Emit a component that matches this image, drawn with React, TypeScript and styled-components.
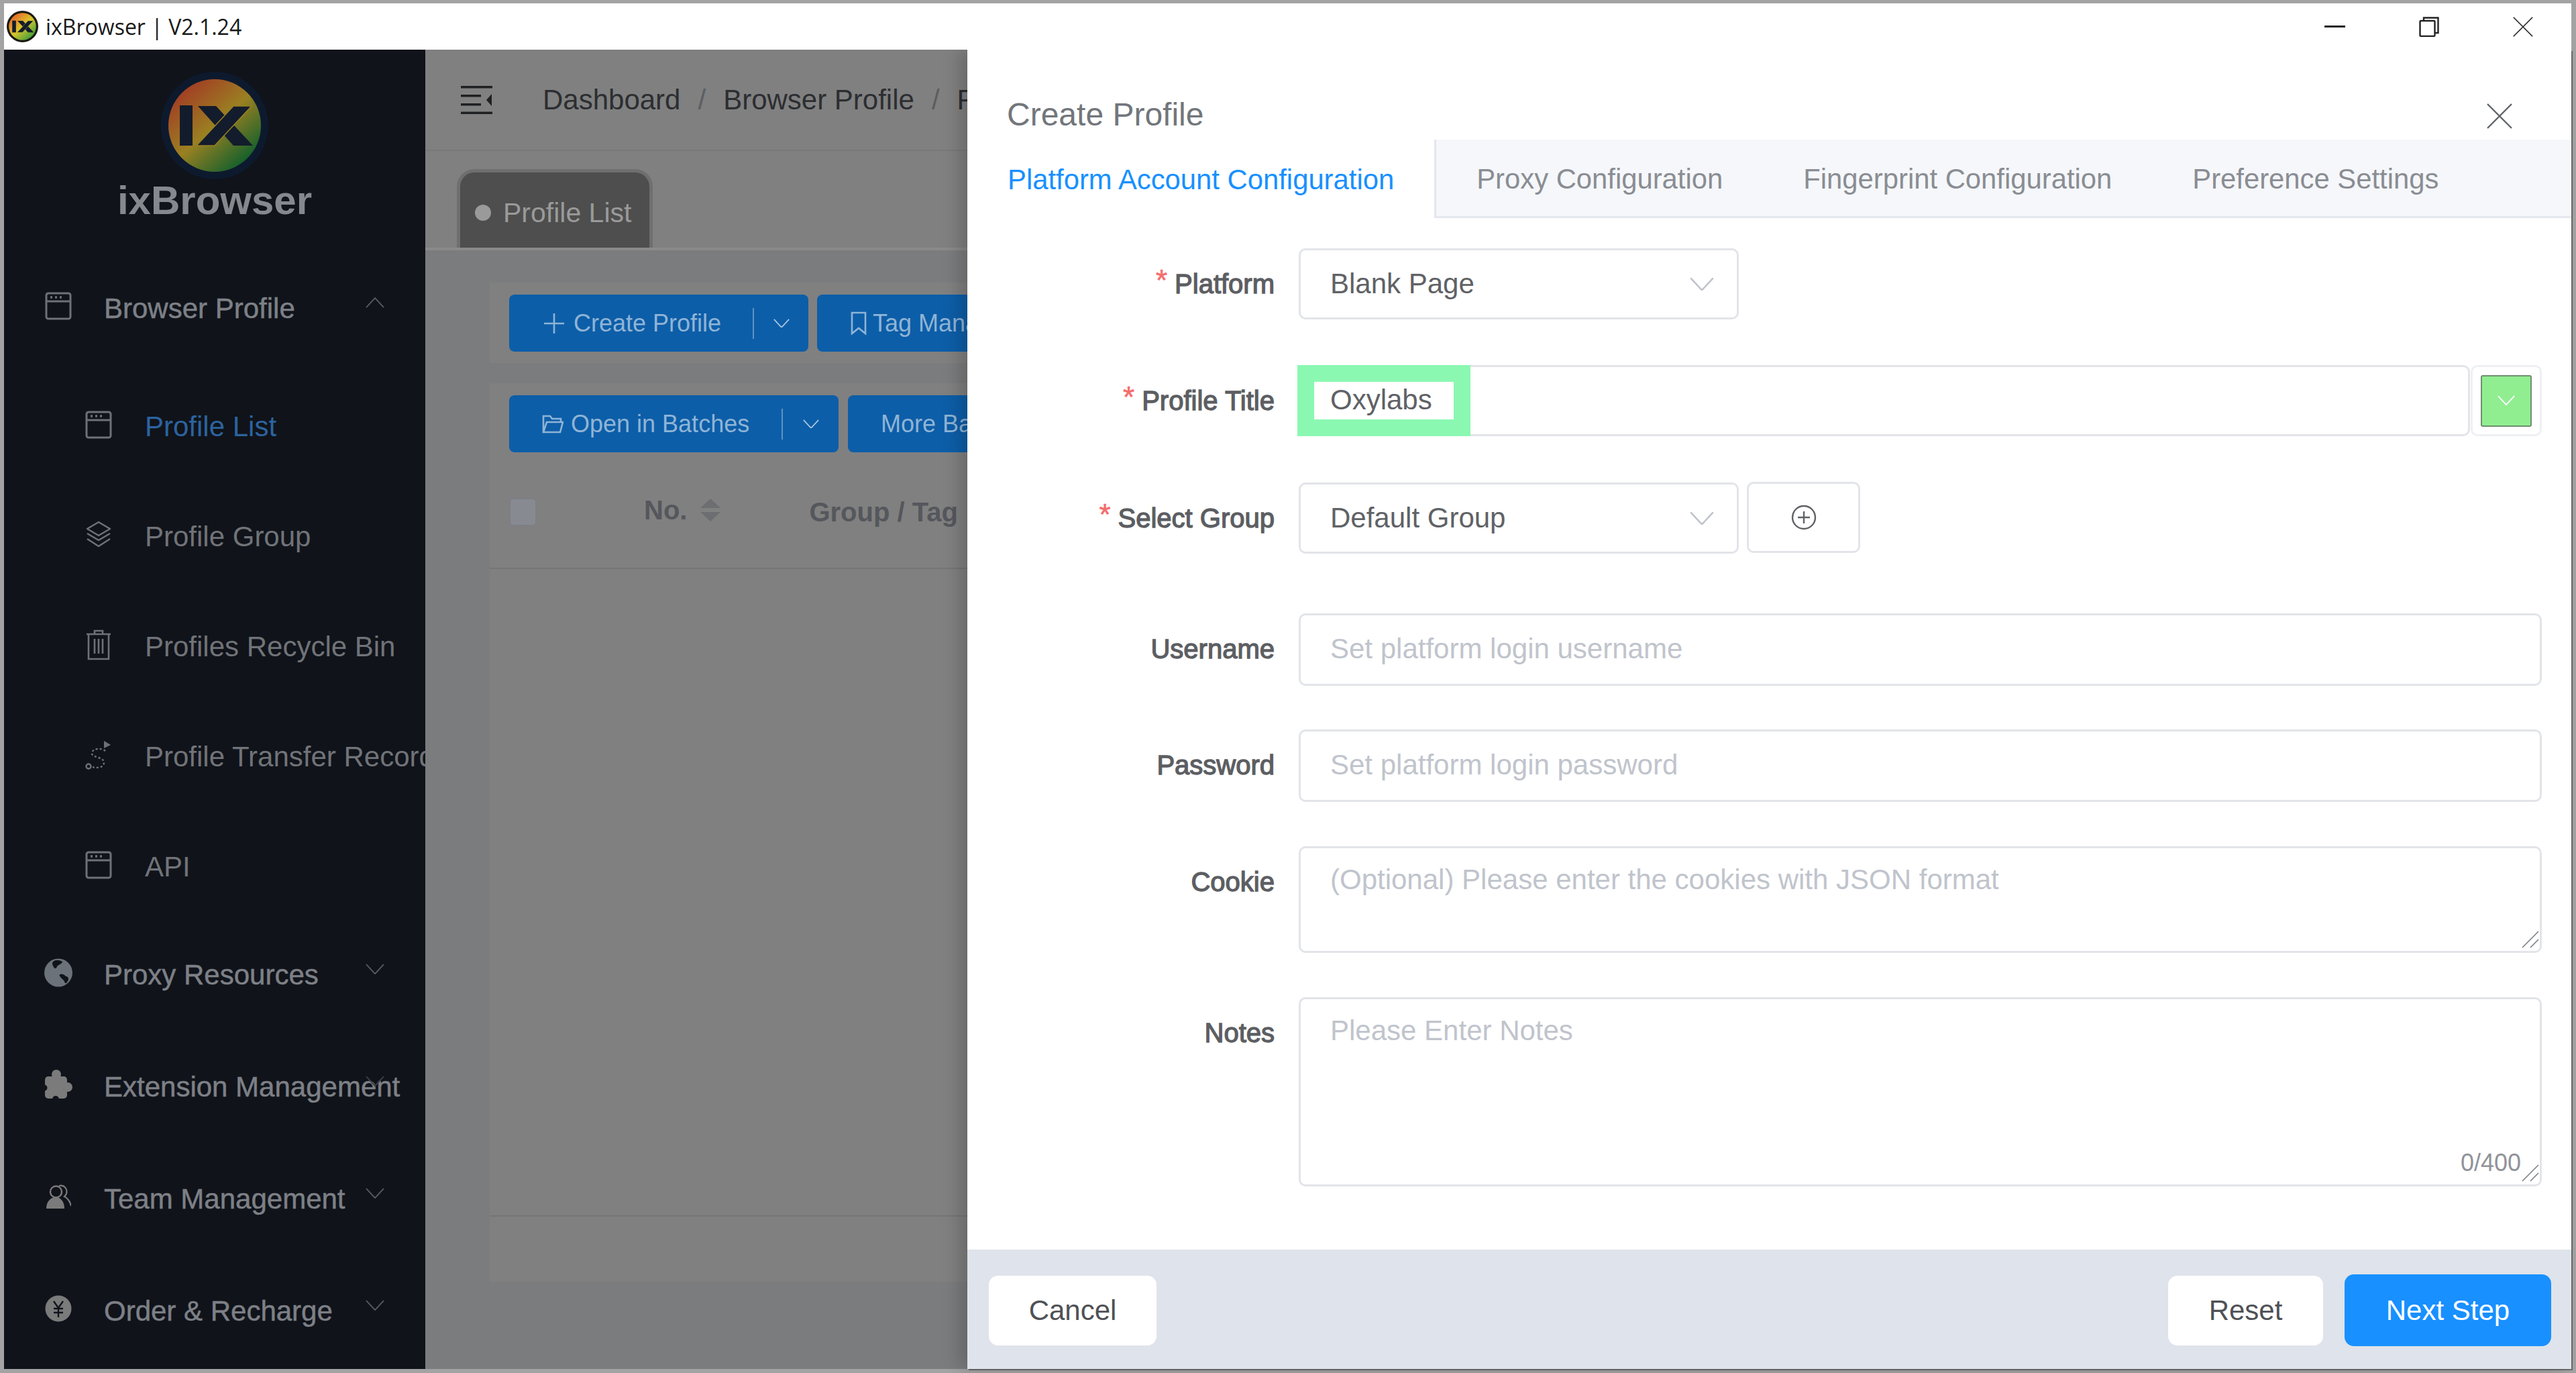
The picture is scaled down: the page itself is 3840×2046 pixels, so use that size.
import React from "react";
import styled, { createGlobalStyle } from "styled-components";

const GlobalStyle = createGlobalStyle`
  html, body {
    margin: 0;
    padding: 0;
    background: #a3a3a3;
    font-family: "Liberation Sans", Arial, sans-serif;
  }
  * {
    box-sizing: border-box;
  }
`;

const Frame = styled.div`
  position: relative;
  width: 3840px;
  height: 2046px;
  padding: 5px 7px 6px 6px;
  background: #a3a3a3;
  display: flex;
  flex-direction: column;
  overflow: hidden;
`;

const TitleBar = styled.header`
  position: relative;
  z-index: 2;
  height: 69px;
  flex: none;
  background: #fff;
  display: flex;
  align-items: center;
  padding-left: 4px;
`;

const AppName = styled.span`
  margin-left: 11px;
  font-family: "Open Sans", "Noto Sans", sans-serif;
  font-size: 32px;
  color: #1a1a1a;
  white-space: nowrap;
`;

const WindowButtons = styled.div`
  margin-left: auto;
  display: flex;
  align-items: center;
  gap: 110px;
  padding-right: 57px;
  color: #222;
`;

const Body = styled.div`
  position: relative;
  flex: 1;
  display: flex;
  min-height: 0;
`;

const Sidebar = styled.aside`
  width: 628px;
  flex: none;
  background: #10131a;
  display: flex;
  flex-direction: column;
  overflow: hidden;
`;

const Brand = styled.div`
  height: 307px;
  flex: none;
  display: flex;
  flex-direction: column;
  align-items: center;
  padding-top: 33px;
`;

const BrandName = styled.div`
  margin-top: -3px;
  font-size: 60px;
  line-height: 70px;
  font-weight: 700;
  color: #85888d;
`;

const TopRow = styled.div<{ $gap?: number }>`
  position: relative;
  height: 156px;
  flex: none;
  display: flex;
  align-items: center;
  padding-left: 60px;
  margin-top: ${(p) => p.$gap ?? 0}px;
  color: #6e7177;
`;

const RowIcon = styled.span`
  width: 42px;
  height: 46px;
  flex: none;
  display: flex;
  align-items: center;
  justify-content: center;
  margin-top: -6px;
`;

const TopLabel = styled.span`
  margin-left: 47px;
  padding-top: 2px;
  font-size: 42px;
  color: #7d8086;
  white-space: nowrap;
  -webkit-text-stroke: 0.5px #7d8086;
`;

const RowChevron = styled.span`
  position: absolute;
  left: 539px;
  top: 62px;
  line-height: 0;
`;

const SubList = styled.div`
  margin-top: 17px;
  display: flex;
  flex-direction: column;
`;

const SubRow = styled.div`
  height: 164px;
  flex: none;
  display: flex;
  align-items: center;
  padding-left: 120px;
  color: #6e7177;
`;

const SubLabel = styled.span<{ $active?: boolean }>`
  margin-left: 48px;
  font-size: 42px;
  color: ${(p) => (p.$active ? "#2c639f" : "#707378")};
  white-space: nowrap;
`;

const Main = styled.main`
  flex: 1;
  min-width: 0;
  background: #7b7c7d;
  display: flex;
  flex-direction: column;
  overflow: hidden;
`;

const NavBar = styled.div`
  height: 151px;
  flex: none;
  background: #808080;
  display: flex;
  align-items: center;
  padding-left: 53px;
  border-bottom: 2px solid #787878;
  white-space: nowrap;
`;

const Crumbs = styled.div`
  margin-left: 75px;
  display: flex;
  gap: 26px;
  font-size: 42px;
  color: #2c2e31;
`;

const CrumbSep = styled.span`
  color: #5c5e61;
`;

const TabStrip = styled.div`
  height: 148px;
  flex: none;
  background: #808080;
  padding: 27px 0 0 47px;
  border-bottom: 4px solid #8a8a8a;
`;

const ViewTab = styled.div`
  width: 292px;
  height: 117px;
  background: #4e4e4e;
  border: 5px solid #6f6f6f;
  border-bottom: none;
  border-radius: 26px 26px 0 0;
  display: flex;
  align-items: center;
  padding: 8px 0 0 22px;
  gap: 18px;
  font-size: 41px;
  color: #9a9a9a;
  white-space: nowrap;
`;

const Dot = styled.span`
  width: 24px;
  height: 24px;
  border-radius: 50%;
  background: #9a9a9a;
`;

const Content = styled.div`
  flex: 1;
  padding: 48px 0 0 96px;
  display: flex;
  flex-direction: column;
`;

const ToolbarCard = styled.div`
  height: 120px;
  flex: none;
  background: #808080;
  padding: 18px 0 0 29px;
  display: flex;
  gap: 13px;
  white-space: nowrap;
`;

const TableCard = styled.div`
  margin-top: 30px;
  height: 1339px;
  flex: none;
  background: #808080;
  padding-top: 18px;
  display: flex;
  flex-direction: column;
  white-space: nowrap;
`;

const TableActions = styled.div`
  display: flex;
  gap: 14px;
  padding-left: 29px;
`;

const BlueButton = styled.div`
  height: 85px;
  flex: none;
  background: #0d5ea8;
  border-radius: 8px;
  display: flex;
  align-items: center;
  color: #8fb4d6;
  font-size: 36px;
`;

const ButtonMain = styled.span<{ $width: number }>`
  width: ${(p) => p.$width}px;
  display: flex;
  align-items: center;
  gap: 11px;
  padding-left: 49px;
`;

const ButtonCaret = styled.span<{ $width: number }>`
  width: ${(p) => p.$width}px;
  height: 46px;
  display: flex;
  align-items: center;
  justify-content: center;
  border-left: 2px solid #5f93c3;
`;

const PlainButton = styled(BlueButton)`
  padding-left: 49px;
  gap: 8px;
  width: 500px;
`;

const HeadRow = styled.div`
  height: 174px;
  flex: none;
  display: flex;
  align-items: center;
  padding: 6px 0 0 29px;
  border-bottom: 2px solid #757575;
  color: #55575c;
  font-size: 40px;
  font-weight: 700;
`;

const CheckBox = styled.span`
  width: 41px;
  height: 42px;
  background: #888a92;
  border: 2px solid #7d7f86;
  border-radius: 6px;
  margin-right: 160px;
`;

const NoLabel = styled.span`
  margin-top: -5px;
`;

const SortGroup = styled.span`
  display: flex;
  flex-direction: column;
  gap: 6px;
  margin: -6px 132px 0 20px;
`;

const Spacer = styled.div`
  flex: 1;
  border-bottom: 2px solid #757575;
`;

const TableFooter = styled.div`
  height: 97px;
  flex: none;
`;

const Drawer = styled.section`
  position: absolute;
  top: 0;
  right: 0;
  bottom: 0;
  width: 2391px;
  background: #fff;
  box-shadow: -12px 0 24px rgba(0, 0, 0, 0.18), 2px 2px 0 #6a6a6a;
  display: flex;
  flex-direction: column;
`;

const DrawerHead = styled.div`
  height: 134px;
  flex: none;
  display: flex;
  justify-content: space-between;
  align-items: flex-start;
  padding: 71px 88px 0 59px;
`;

const DrawerTitle = styled.h2`
  margin: 0;
  font-size: 48px;
  line-height: 52px;
  font-weight: 400;
  color: #72767b;
`;

const CloseButton = styled.span`
  margin-top: 9px;
  line-height: 0;
  color: #5f6368;
`;

const Tabs = styled.nav`
  height: 117px;
  flex: none;
  background: #f5f7fa;
  display: flex;
  border-bottom: 3px solid #e4e7ed;
`;

const Tab = styled.div<{ $active?: boolean }>`
  padding: 3px 60px 0;
  height: ${(p) => (p.$active ? "117px" : "114px")};
  display: flex;
  align-items: center;
  font-size: 41.8px;
  white-space: nowrap;
  color: ${(p) => (p.$active ? "#1890ff" : "#8a8d93")};
  background: ${(p) => (p.$active ? "#fff" : "transparent")};
  border-right: ${(p) => (p.$active ? "3px solid #e4e7ed" : "none")};
`;

const Form = styled.form`
  flex: 1;
  min-height: 0;
  padding: 45px 44px 0 0;
  display: flex;
  flex-direction: column;
`;

const Row = styled.div<{ $gap?: number }>`
  display: flex;
  align-items: flex-start;
  margin-bottom: ${(p) => p.$gap ?? 66}px;
`;

const Label = styled.label`
  width: 458px;
  height: 106px;
  flex: none;
  display: flex;
  align-items: center;
  justify-content: flex-end;
  gap: 11px;
  margin-right: 36px;
  font-size: 40px;
  color: #5c5e62;
  -webkit-text-stroke: 1.3px #5c5e62;
`;

const Star = styled.span`
  color: #f56c6c;
  font-size: 44px;
  margin-top: -10px;
  -webkit-text-stroke: 0.6px #f56c6c;
`;

const Select = styled.div`
  width: 656px;
  height: 106px;
  flex: none;
  border: 3px solid #e2e4e9;
  border-radius: 10px;
  display: flex;
  align-items: center;
  justify-content: space-between;
  padding: 0 34px 0 44px;
  font-size: 42px;
  color: #606266;
`;

const TextInput = styled.input`
  flex: 1;
  min-width: 0;
  height: 108px;
  border: 3px solid #e2e4e9;
  border-radius: 10px;
  padding: 0 44px 2px;
  outline: none;
  font: 42px "Liberation Sans", Arial, sans-serif;
  color: #606266;
  &::placeholder {
    color: #c0c4cc;
    opacity: 1;
  }
`;

const AreaWrap = styled.div<{ $height: number }>`
  position: relative;
  flex: 1;
  height: ${(p) => p.$height}px;
`;

const TextArea = styled.textarea`
  display: block;
  width: 100%;
  height: 100%;
  resize: none;
  border: 3px solid #e2e4e9;
  border-radius: 10px;
  padding: 23px 44px;
  outline: none;
  font: 42px/1.15 "Liberation Sans", Arial, sans-serif;
  color: #606266;
  &::placeholder {
    color: #c0c4cc;
    opacity: 1;
  }
`;

const Grip = styled.span`
  position: absolute;
  right: 4px;
  bottom: 7px;
  line-height: 0;
`;

const Counter = styled.span`
  position: absolute;
  right: 31px;
  bottom: 14px;
  font-size: 36px;
  color: #909399;
`;

const TitleField = styled.div`
  flex: 1;
  height: 106px;
  min-width: 0;
  display: flex;
  margin-left: -2px;
`;

const TitleInput = styled.div`
  flex: 1;
  min-width: 0;
  border: 3px solid #e2e4e9;
  border-radius: 0 10px 10px 0;
  border-left: none;
`;

const Highlight = styled.span`
  width: 258px;
  flex: none;
  background: #8bf8b2;
  padding: 25px;
  display: flex;
`;

const HighlightText = styled.span`
  flex: 1;
  background: #fff;
  padding-left: 24px;
  font-size: 42px;
  line-height: 54px;
  color: #606266;
`;

const ColorBox = styled.div`
  width: 106px;
  flex: none;
  margin-left: 1px;
  border: 3px solid #eef0f3;
  border-radius: 10px;
  display: flex;
  align-items: center;
  justify-content: center;
`;

const ColorSwatch = styled.span`
  width: 76px;
  height: 77px;
  background: #90ee90;
  border: 2px solid #6f8f6f;
  border-radius: 3px;
  display: flex;
  align-items: center;
  justify-content: center;
`;

const AddButton = styled.div`
  width: 169px;
  height: 106px;
  flex: none;
  margin-left: 12px;
  margin-top: -1px;
  border: 3px solid #e2e4e9;
  border-radius: 10px;
  display: flex;
  align-items: center;
  justify-content: center;
  color: #606266;
`;

const Footer = styled.footer`
  height: 178px;
  flex: none;
  background: #dfe3eb;
  display: flex;
  align-items: center;
  padding: 3px 30px 0 32px;
  gap: 32px;
`;

const FootButton = styled.button<{ $width: number; $primary?: boolean }>`
  width: ${(p) => p.$width}px;
  height: ${(p) => (p.$primary ? 107 : 104)}px;
  border: none;
  border-radius: 14px;
  background: ${(p) => (p.$primary ? "#1890ff" : "#fff")};
  color: ${(p) => (p.$primary ? "#fff" : "#4f5155")};
  font: 42px "Liberation Sans", Arial, sans-serif;
  &:first-child {
    margin-right: auto;
  }
`;

function Logo({ size, id, ring, from, mid, to }: { size: number; id: string; ring: string; from: string; mid: string; to: string }) {
  return (
    <svg width={size} height={size} viewBox="0 0 160 160" style={{ flex: "none" }}>
      <defs>
        <linearGradient id={id} x1="0.15" y1="0.1" x2="0.85" y2="0.9">
          <stop offset="0" stopColor={from} />
          <stop offset="0.5" stopColor={mid} />
          <stop offset="1" stopColor={to} />
        </linearGradient>
      </defs>
      <circle cx="80" cy="80" r="80" fill={ring} />
      <circle cx="80" cy="80" r="69" fill={`url(#${id})`} />
      <rect x="28" y="50" width="19" height="60" fill="#131c2c" />
      <polygon points="55,51 82,51 137,110 108,110" fill="#131c2c" />
      <polygon points="108,51 135,51 80,110 53,110" fill="#131c2c" stroke={mid} strokeWidth="1.5" />
    </svg>
  );
}

function Chevron({ size = 28, up, color = "#55585e" }: { size?: number; up?: boolean; color?: string }) {
  return (
    <svg width={size} height={size * 0.58} viewBox="0 0 28 16" fill="none" stroke={color} strokeWidth="2">
      <path d={up ? "M1 15 14 1 27 15" : "M1 1 14 15 27 1"} />
    </svg>
  );
}

function WindowIcon() {
  return (
    <svg width="40" height="42" viewBox="0 0 40 42" fill="none" stroke="currentColor" strokeWidth="3">
      <rect x="2" y="2" width="36" height="38" rx="3" />
      <path d="M2 14h36" />
      <path d="M8 8h3M15 8h3M22 8h3" strokeWidth="3.5" />
    </svg>
  );
}

function LayersIcon() {
  return (
    <svg width="40" height="42" viewBox="0 0 40 42" fill="none" stroke="currentColor" strokeWidth="2.6" strokeLinejoin="round">
      <path d="M20 2 37 12 20 22 3 12Z" />
      <path d="M3 19l17 10 17-10" />
      <path d="M3 27l17 11 17-11" />
    </svg>
  );
}

function TrashIcon() {
  return (
    <svg width="38" height="46" viewBox="0 0 38 46" fill="none" stroke="currentColor" strokeWidth="2.6">
      <path d="M1 7h36M13 7V2h12v5" />
      <path d="M4 7v37h30V7" />
      <path d="M13 14v22M19 14v22M25 14v22" />
    </svg>
  );
}

function RouteIcon() {
  return (
    <svg width="40" height="46" viewBox="0 0 40 46" fill="none" stroke="currentColor" strokeWidth="2.4">
      <path d="M30 17c-6-5-19-4-20 3s18 6 18 14-10 9-17 7" strokeDasharray="3 3" />
      <circle cx="5" cy="40" r="3.5" />
      <path d="M28 14V2l10 6-10 5Z" fill="currentColor" stroke="none" />
    </svg>
  );
}

function GlobeIcon() {
  return (
    <svg width="43" height="43" viewBox="0 0 43 43">
      <circle cx="21.5" cy="21.5" r="21.5" fill="#6c727a" />
      <path d="M13 5C17 1 24 2 28 5 25 9 22 9 20 11 19 14 17 16 15 14 14 11 11 9 13 5Z" fill="#10131a" />
      <path d="M23 25C26 22 30 24 33 27 37 28 38 31 36 34 34 37 33 39 31 36 31 32 25 31 23 25Z" fill="#10131a" />
    </svg>
  );
}

function PuzzleIcon() {
  return (
    <svg width="42" height="44" viewBox="0 0 42 44">
      <g fill="#7b7b7b">
        <rect x="1" y="10" width="33" height="33" rx="5" />
        <circle cx="18" cy="7" r="7" />
        <circle cx="35" cy="26" r="7" />
      </g>
      <circle cx="0" cy="27" r="4.5" fill="#10131a" />
      <circle cx="17" cy="44" r="5" fill="#10131a" />
    </svg>
  );
}

function TeamIcon() {
  return (
    <svg width="38" height="38" viewBox="0 0 38 38" fill="none" stroke="#7b7b7b">
      <circle cx="15.5" cy="12" r="8.5" strokeWidth="2.4" />
      <path d="M20 3C28 1 33 8 31 15 30 17 29 18 28 19 33 21 37 28 38 33" strokeWidth="2.2" />
      <path d="M1 37C1 26 8 20 15 20 22 20 28 26 28 37Z" fill="#7b7b7b" stroke="none" />
    </svg>
  );
}

function YenIcon() {
  return (
    <svg width="40" height="40" viewBox="0 0 40 40">
      <circle cx="20" cy="20" r="19.5" fill="#7b7b7b" />
      <path d="M13 9l7 10 7-10M20 19v14M13 20h14M13 26h14" fill="none" stroke="#10131a" strokeWidth="2.4" />
    </svg>
  );
}

function HamburgerIcon() {
  return (
    <svg width="47" height="42" viewBox="0 0 47 42" fill="#1f2022">
      <rect x="0" y="0" width="47" height="3.5" />
      <rect x="0" y="13" width="30" height="3.5" />
      <rect x="0" y="26" width="30" height="3.5" />
      <rect x="0" y="38.5" width="47" height="3.5" />
      <polygon points="46,12 38,21 46,30" />
    </svg>
  );
}

function XIcon({ size, width = 2 }: { size: number; width?: number }) {
  return (
    <svg width={size} height={size} viewBox="0 0 38 38" fill="none" stroke="currentColor" strokeWidth={width}>
      <path d="M1 1 37 37M37 1 1 37" />
    </svg>
  );
}

function FolderIcon() {
  return (
    <svg width="32" height="30" viewBox="0 0 32 30" fill="none" stroke="currentColor" strokeWidth="2.6">
      <path d="M2 27V3h10l3 4h13v5M2 27h25l4-15H7L2 27Z" />
    </svg>
  );
}

function BookmarkIcon() {
  return (
    <svg width="26" height="36" viewBox="0 0 26 36" fill="none" stroke="currentColor" strokeWidth="2.6">
      <path d="M3 2h20v31L13 25 3 33Z" />
    </svg>
  );
}

function GripIcon() {
  return (
    <svg width="26" height="26" viewBox="0 0 26 26" stroke="#7d7f83" strokeWidth="1.6">
      <path d="M1 25 25 1M13 25 25 13" />
    </svg>
  );
}

export default function App() {
  return (
    <>
      <GlobalStyle />
      <Frame>
        <TitleBar>
          <Logo size={47} id="favicon" ring="#1a1a12" from="#e8672a" mid="#d9c62c" to="#3f9e3a" />
          <AppName>ixBrowser | V2.1.24</AppName>
          <WindowButtons>
            <svg width="31" height="3" viewBox="0 0 31 3"><rect width="31" height="3" fill="currentColor" /></svg>
            <svg width="30" height="30" viewBox="0 0 30 30" fill="none" stroke="currentColor" strokeWidth="2.4">
              <rect x="1.5" y="6" width="22" height="23" rx="1.5" />
              <path d="M7 6V1.5h21.5V24H23.5" />
            </svg>
            <XIcon size={30} />
          </WindowButtons>
        </TitleBar>
        <Body>
          <Sidebar>
            <Brand>
              <Logo size={160} id="brand" ring="#0d1a2e" from="#a33c24" mid="#9a8022" to="#0e5f2c" />
              <BrandName>ixBrowser</BrandName>
            </Brand>
            <TopRow>
              <RowIcon><WindowIcon /></RowIcon>
              <TopLabel>Browser Profile</TopLabel>
              <RowChevron><Chevron up /></RowChevron>
            </TopRow>
            <SubList>
              <SubRow>
                <RowIcon><WindowIcon /></RowIcon>
                <SubLabel $active>Profile List</SubLabel>
              </SubRow>
              <SubRow>
                <RowIcon><LayersIcon /></RowIcon>
                <SubLabel>Profile Group</SubLabel>
              </SubRow>
              <SubRow>
                <RowIcon><TrashIcon /></RowIcon>
                <SubLabel>Profiles Recycle Bin</SubLabel>
              </SubRow>
              <SubRow>
                <RowIcon><RouteIcon /></RowIcon>
                <SubLabel>Profile Transfer Record</SubLabel>
              </SubRow>
              <SubRow>
                <RowIcon><WindowIcon /></RowIcon>
                <SubLabel>API</SubLabel>
              </SubRow>
            </SubList>
            <TopRow>
              <RowIcon><GlobeIcon /></RowIcon>
              <TopLabel>Proxy Resources</TopLabel>
              <RowChevron><Chevron /></RowChevron>
            </TopRow>
            <TopRow $gap={11}>
              <RowIcon><PuzzleIcon /></RowIcon>
              <TopLabel>Extension Management</TopLabel>
              <RowChevron><Chevron color="#3c3f45" /></RowChevron>
            </TopRow>
            <TopRow $gap={11}>
              <RowIcon><TeamIcon /></RowIcon>
              <TopLabel>Team Management</TopLabel>
              <RowChevron><Chevron /></RowChevron>
            </TopRow>
            <TopRow $gap={11}>
              <RowIcon><YenIcon /></RowIcon>
              <TopLabel>Order &amp; Recharge</TopLabel>
              <RowChevron><Chevron /></RowChevron>
            </TopRow>
          </Sidebar>
          <Main>
            <NavBar>
              <HamburgerIcon />
              <Crumbs>
                <span>Dashboard</span>
                <CrumbSep>/</CrumbSep>
                <span>Browser Profile</span>
                <CrumbSep>/</CrumbSep>
                <span>Profile List</span>
              </Crumbs>
            </NavBar>
            <TabStrip>
              <ViewTab>
                <Dot />
                Profile List
              </ViewTab>
            </TabStrip>
            <Content>
              <ToolbarCard>
                <BlueButton>
                  <ButtonMain $width={363}>
                    <svg width="36" height="36" viewBox="0 0 36 36" stroke="currentColor" strokeWidth="2.6"><path d="M18 3v30M3 18h30" /></svg>
                    Create Profile
                  </ButtonMain>
                  <ButtonCaret $width={83}><Chevron size={24} color="#a9c6e0" /></ButtonCaret>
                </BlueButton>
                <PlainButton>
                  <BookmarkIcon />
                  Tag Management
                </PlainButton>
              </ToolbarCard>
              <TableCard>
                <TableActions>
                  <BlueButton>
                    <ButtonMain $width={406}>
                      <FolderIcon />
                      Open in Batches
                    </ButtonMain>
                    <ButtonCaret $width={85}><Chevron size={24} color="#a9c6e0" /></ButtonCaret>
                  </BlueButton>
                  <PlainButton>More Batch Actions</PlainButton>
                </TableActions>
                <HeadRow>
                  <CheckBox />
                  <NoLabel>No.</NoLabel>
                  <SortGroup>
                    <svg width="30" height="14" viewBox="0 0 30 14" fill="#6c6e72"><polygon points="15,0 30,14 0,14" /></svg>
                    <svg width="30" height="14" viewBox="0 0 30 14" fill="#6c6e72"><polygon points="0,0 30,0 15,14" /></svg>
                  </SortGroup>
                  Group / Tag
                </HeadRow>
                <Spacer />
                <TableFooter />
              </TableCard>
            </Content>
          </Main>
          <Drawer>
            <DrawerHead>
              <DrawerTitle>Create Profile</DrawerTitle>
              <CloseButton><XIcon size={38} width={2.4} /></CloseButton>
            </DrawerHead>
            <Tabs>
              <Tab $active>Platform Account Configuration</Tab>
              <Tab>Proxy Configuration</Tab>
              <Tab>Fingerprint Configuration</Tab>
              <Tab>Preference Settings</Tab>
            </Tabs>
            <Form>
              <Row $gap={68}>
                <Label><Star>*</Star>Platform</Label>
                <Select>Blank Page<Chevron size={36} color="#c0c4cc" /></Select>
              </Row>
              <Row $gap={69}>
                <Label><Star>*</Star>Profile Title</Label>
                <TitleField>
                  <Highlight><HighlightText>Oxylabs</HighlightText></Highlight>
                  <TitleInput />
                  <ColorBox>
                    <ColorSwatch><Chevron size={26} color="#fff" /></ColorSwatch>
                  </ColorBox>
                </TitleField>
              </Row>
              <Row $gap={89}>
                <Label><Star>*</Star>Select Group</Label>
                <Select>Default Group<Chevron size={36} color="#c0c4cc" /></Select>
                <AddButton>
                  <svg width="38" height="38" viewBox="0 0 38 38" fill="none" stroke="currentColor" strokeWidth="2.4">
                    <circle cx="19" cy="19" r="17" />
                    <path d="M19 10v18M10 19h18" />
                  </svg>
                </AddButton>
              </Row>
              <Row $gap={65}>
                <Label>Username</Label>
                <TextInput placeholder="Set platform login username" readOnly />
              </Row>
              <Row>
                <Label>Password</Label>
                <TextInput placeholder="Set platform login password" readOnly />
              </Row>
              <Row>
                <Label>Cookie</Label>
                <AreaWrap $height={159}>
                  <TextArea placeholder="(Optional) Please enter the cookies with JSON format" readOnly />
                  <Grip><GripIcon /></Grip>
                </AreaWrap>
              </Row>
              <Row $gap={0}>
                <Label>Notes</Label>
                <AreaWrap $height={282}>
                  <TextArea placeholder="Please Enter Notes" readOnly />
                  <Counter>0/400</Counter>
                  <Grip><GripIcon /></Grip>
                </AreaWrap>
              </Row>
            </Form>
            <Footer>
              <FootButton type="button" $width={250}>Cancel</FootButton>
              <FootButton type="button" $width={231}>Reset</FootButton>
              <FootButton type="button" $width={308} $primary>Next Step</FootButton>
            </Footer>
          </Drawer>
        </Body>
      </Frame>
    </>
  );
}
